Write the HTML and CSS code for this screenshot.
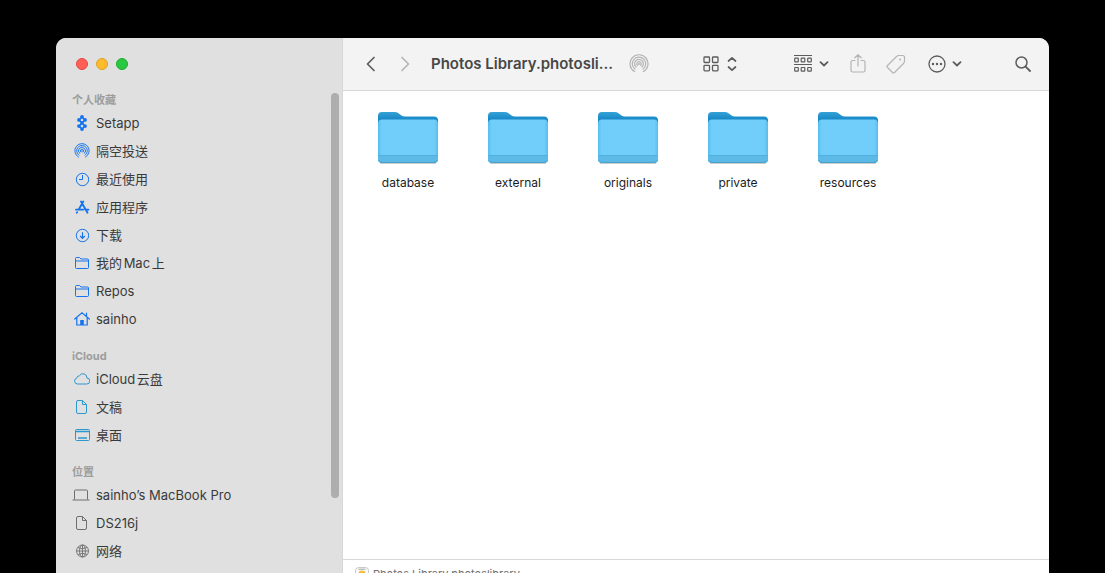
FILE: index.html
```html
<!DOCTYPE html>
<html lang="zh-CN">
<head>
<meta charset="utf-8">
<meta name="viewport" content="width=device-width, initial-scale=1">
<title>Photos Library.photoslibrary</title>
<link rel="stylesheet" href="styles.css">
</head>
<body>
<svg class="defs" aria-hidden="true">
  <defs>
    <linearGradient id="folder-back" x1="0" y1="0" x2="0" y2="1">
      <stop offset="0" stop-color="#35a3d8"/><stop offset=".16" stop-color="#1585c4"/><stop offset="1" stop-color="#1585c4"/>
    </linearGradient>
    <linearGradient id="folder-front" x1="0" y1="0" x2="1" y2="0">
      <stop offset="0" stop-color="#55bdec"/><stop offset=".06" stop-color="#71cdfa"/><stop offset=".94" stop-color="#71cdfa"/><stop offset="1" stop-color="#55bdec"/>
    </linearGradient>
    <symbol id="i-airdrop" viewBox="0 0 20 20">
      <g fill="none" stroke="currentColor" stroke-width="1.200" stroke-linecap="round">
        <path d="M5.600 17.600A9 9 0 1 1 14.400 17.600"/>
        <path d="M6 15.200A6.700 6.700 0 1 1 14 15.200"/>
        <path d="M7 13A4.400 4.400 0 1 1 13 13"/>
        <path d="M8.500 11.300A2.100 2.100 0 1 1 11.500 11.300"/>
      </g>
      <circle cx="10" cy="10" r="1" fill="currentColor"/>
    </symbol>
    <symbol id="i-folder" viewBox="0 0 16 16">
      <path d="M1.500 12.500V3.500q0-1 1-1h3l1.500 1.500h6.500q1 0 1 1v7.500q0 1-1 1h-11q-1 0-1-1zM1.500 6h13" fill="none" stroke="currentColor"/>
    </symbol>
    <symbol id="i-doc" viewBox="0 0 16 16">
      <path d="M4 1.500h4.500l4 4v7.500q0 1.500-1.500 1.500h-7q-1.500 0-1.500-1.500v-10q0-1.500 1.500-1.500zM8.500 1.500v4h4" fill="none" stroke="currentColor"/>
    </symbol>
    <symbol id="i-down" viewBox="0 0 10 6">
      <path d="M1.500 1.200L5 4.500l3.500-3.300" fill="none" stroke="currentColor" stroke-width="1.800" stroke-linecap="round" stroke-linejoin="round"/>
    </symbol>
    <symbol id="i-big-folder" viewBox="0 0 60 53">
      <path d="M2 52.300h56" stroke="#000" stroke-opacity=".25"/>
      <path d="M0 5q0-4 4-4h12.500q2.500 0 4 1.300l3 2.300q1.400 1 3.500 1h29q4 0 4 4v38q0 4-4 4h-52q-4 0-4-4z" fill="url(#folder-back)"/>
      <path d="M0 12.500q0-4 4-4h52q4 0 4 4v35.500q0 4-4 4h-52q-4 0-4-4z" fill="url(#folder-front)"/>
      <path d="M0 45h60v3q0 4-4 4h-52q-4 0-4-4z" fill="#5db9e6"/>
      <path d="M0 44.500h60" stroke="#50b1df"/>
      <path d="M1 49.500q1 1.900 3 1.900h52q2 0 3-1.900" fill="none" stroke="#459fca"/>
    </symbol>
  </defs>
</svg>

<div class="window">
  <aside class="sidebar">
    <div class="lights">
      <button class="light close" aria-label="关闭"></button>
      <button class="light minimize" aria-label="最小化"></button>
      <button class="light maximize" aria-label="缩放"></button>
    </div>
    <nav class="places">
      <section class="group">
        <h2 class="heading">个人收藏</h2>
        <a class="place" href="#"><svg class="icon" viewBox="0 0 16 16"><g fill="currentColor"><circle cx="8" cy="1.900" r="1.900"/><circle cx="5" cy="4.900" r="1.900"/><circle cx="11" cy="4.900" r="1.900"/><circle cx="8" cy="8" r="1.900"/><circle cx="5" cy="11.100" r="1.900"/><circle cx="11" cy="11.100" r="1.900"/><circle cx="8" cy="14.100" r="1.900"/><path d="M8 2l3 3-6 6 3 3 3-3-6-6z" fill="none" stroke="currentColor" stroke-width="1.200"/></g></svg>Setapp</a>
        <a class="place" href="#"><svg class="icon"><use href="#i-airdrop"/></svg>隔空投送</a>
        <a class="place" href="#"><svg class="icon" viewBox="0 0 16 16"><g fill="none" stroke="currentColor"><circle cx="8.500" cy="8.500" r="6.200"/><path d="M8.500 4v4.500h-3.500"/></g></svg>最近使用</a>
        <a class="place" href="#"><svg class="icon" viewBox="0 0 16 16"><g fill="none" stroke="currentColor" stroke-width="1.800" stroke-linecap="round"><path d="M9.300 2.500L5 10M7 2.500l6.500 11.300M2 10.700h7.500M12.500 10.700h2M3.200 13.200l-.4.600"/></g></svg>应用程序</a>
        <a class="place" href="#"><svg class="icon" viewBox="0 0 16 16"><g fill="none" stroke="currentColor"><circle cx="8.500" cy="8.500" r="6.200"/><path d="M8.500 5.200v6M6.200 9l2.300 2.300 2.300-2.300" stroke-width="1.200"/></g></svg>下载</a>
        <a class="place" href="#"><svg class="icon"><use href="#i-folder"/></svg>我的Mac上</a>
        <a class="place" href="#"><svg class="icon"><use href="#i-folder"/></svg>Repos</a>
        <a class="place" href="#"><svg class="icon" viewBox="0 0 16 16"><path d="M.7 8L8 1.700 15.300 8M2.800 6.800v7.200h10.400v-7.200M12.500 5v-2.800" fill="none" stroke="currentColor" stroke-width="1.200" stroke-linecap="round"/><path d="M6.200 9h3.600v5h-3.600z" fill="currentColor"/></svg>sainho</a>
      </section>
      <section class="group cloud">
        <h2 class="heading">iCloud</h2>
        <a class="place" href="#"><svg class="icon" viewBox="0 0 16 16"><path d="M3.600 13a3 3 0 0 1-.8-5.900a2.600 2.600 0 0 1 2.600-2.300a4 4 0 0 1 7.500 2.200a3 3 0 0 1-.2 6z" fill="none" stroke="currentColor"/></svg>iCloud云盘</a>
        <a class="place" href="#"><svg class="icon"><use href="#i-doc"/></svg>文稿</a>
        <a class="place" href="#"><svg class="icon" viewBox="0 0 16 16"><rect x="1.500" y="2.500" width="14" height="11" rx="1" fill="none" stroke="currentColor"/><path d="M1.500 4.500h14M4 11h9" stroke="currentColor" stroke-width="1.400"/></svg>桌面</a>
      </section>
      <section class="group devices">
        <h2 class="heading">位置</h2>
        <a class="place" href="#"><svg class="icon wide" viewBox="0 0 18 16"><path d="M2.500 12.500v-8.500q0-1 1-1h11q1 0 1 1v8.500M.5 13h17" fill="none" stroke="currentColor"/></svg>sainho’s MacBook Pro</a>
        <a class="place" href="#"><svg class="icon"><use href="#i-doc"/></svg>DS216j</a>
        <a class="place" href="#"><svg class="icon" viewBox="0 0 16 16"><g fill="none" stroke="currentColor" stroke-width=".9"><circle cx="8.500" cy="8" r="6"/><ellipse cx="8.500" cy="8" rx="3" ry="6"/><path d="M8.500 2v12M2.500 8h12M3.800 4.500q4.700 2.400 9.400 0M3.800 11.500q4.700-2.400 9.400 0"/></g></svg>网络</a>
      </section>
    </nav>
    <div class="scrollbar"></div>
  </aside>

  <main class="content">
    <header class="toolbar">
      <button class="tool" aria-label="后退"><svg class="glyph" viewBox="0 0 16 16"><path d="M11 1.500L4.500 8l6.500 6.500" fill="none" stroke="currentColor" stroke-width="1.700" stroke-linecap="round" stroke-linejoin="round"/></svg></button>
      <button class="tool forward" aria-label="前进" disabled><svg class="glyph" viewBox="0 0 16 16"><path d="M5 1.500L11.500 8 5 14.500" fill="none" stroke="currentColor" stroke-width="1.700" stroke-linecap="round" stroke-linejoin="round"/></svg></button>
      <h1 class="title">Photos Library.photosli...</h1>
      <button class="tool" aria-label="隔空投送" disabled><svg class="glyph large"><use href="#i-airdrop"/></svg></button>
      <button class="tool view" aria-label="显示方式">
        <svg class="glyph" viewBox="0 0 16 16"><g fill="none" stroke="currentColor" stroke-width="1.300"><rect x="1" y="1" width="5.500" height="5.500" rx=".8"/><rect x="9.500" y="1" width="5.500" height="5.500" rx=".8"/><rect x="1" y="9.300" width="5.500" height="5.500" rx=".8"/><rect x="9.500" y="9.300" width="5.500" height="5.500" rx=".8"/></g></svg>
        <svg class="arrows" viewBox="0 0 10 16"><path d="M1.500 5L5 1.800 8.500 5M1.500 11L5 14.200 8.500 11" fill="none" stroke="currentColor" stroke-width="1.700" stroke-linecap="round" stroke-linejoin="round"/></svg>
      </button>
      <button class="tool sort" aria-label="分组">
        <svg class="glyph large" viewBox="0 0 20 20"><g fill="none" stroke="currentColor" stroke-width="1.200"><path d="M1 1.500h18M1 10.500h18"/><rect x="1.700" y="4.200" width="3.600" height="3.600" rx=".6"/><rect x="8.200" y="4.200" width="3.600" height="3.600" rx=".6"/><rect x="14.700" y="4.200" width="3.600" height="3.600" rx=".6"/><rect x="1.700" y="13.500" width="3.600" height="3.600" rx=".6"/><rect x="8.200" y="13.500" width="3.600" height="3.600" rx=".6"/><rect x="14.700" y="13.500" width="3.600" height="3.600" rx=".6"/></g></svg>
        <svg class="caret"><use href="#i-down"/></svg>
      </button>
      <button class="tool share" aria-label="共享" disabled><svg class="glyph large" viewBox="0 0 20 20"><path d="M7 6.500H4.500q-1.500 0-1.500 1.500v8.500q0 1.500 1.500 1.500h11q1.500 0 1.500-1.500v-8.500q0-1.500-1.500-1.500H13M10 12V.8M6.800 3.800L10 .7l3.200 3.100" fill="none" stroke="currentColor" stroke-width="1.200" stroke-linecap="round" stroke-linejoin="round"/></svg></button>
      <button class="tool tag" aria-label="标签" disabled><svg class="glyph large" viewBox="0 0 20 20"><path d="M1.500 11.500L10.500 2.500q1-1 2.500-1h3.500q2 0 2 2v3.500q0 1.500-1 2.500l-9 9q-1 1-2 0l-5-5q-1-1 0-2z" fill="none" stroke="currentColor" stroke-width="1.200" stroke-linejoin="round"/><circle cx="14" cy="5.500" r="1" fill="currentColor"/></svg></button>
      <button class="tool more" aria-label="操作">
        <svg class="glyph large" viewBox="0 0 20 20"><circle cx="10" cy="10" r="8" fill="none" stroke="currentColor" stroke-width="1.300"/><g fill="currentColor"><circle cx="6" cy="10" r="1.200"/><circle cx="10" cy="10" r="1.200"/><circle cx="14" cy="10" r="1.200"/></g></svg>
        <svg class="caret"><use href="#i-down"/></svg>
      </button>
      <button class="tool search" aria-label="搜索"><svg class="glyph" viewBox="0 0 16 16"><circle cx="6.500" cy="6.500" r="5.500" fill="none" stroke="currentColor" stroke-width="1.500"/><path d="M10.600 10.600L15 15" stroke="currentColor" stroke-width="1.800" stroke-linecap="round"/></svg></button>
    </header>
    <div class="files">
      <a class="file" href="#"><svg class="folder"><use href="#i-big-folder"/></svg>database</a>
      <a class="file" href="#"><svg class="folder"><use href="#i-big-folder"/></svg>external</a>
      <a class="file" href="#"><svg class="folder"><use href="#i-big-folder"/></svg>originals</a>
      <a class="file" href="#"><svg class="folder"><use href="#i-big-folder"/></svg>private</a>
      <a class="file" href="#"><svg class="folder"><use href="#i-big-folder"/></svg>resources</a>
    </div>
    <footer class="pathbar">
      <svg class="app" viewBox="0 0 14 14"><rect x=".5" y=".5" width="13" height="13" rx="3" fill="#fafafa" stroke="#c9c9c9"/><path d="M3.500 2.200h7" stroke="#9aa79a"/><ellipse cx="7" cy="5.500" rx="3.200" ry="2" fill="#f6c13c"/><ellipse cx="5" cy="8" rx="1.800" ry="2.500" fill="#e9a04f"/><ellipse cx="9" cy="8" rx="1.800" ry="2.500" fill="#f09a3e"/></svg>
      <span>Photos Library.photoslibrary</span>
    </footer>
  </main>
</div>
</body>
</html>
```

FILE: styles.css
```css
* {
  box-sizing: border-box;
}

body {
  margin: 0;
  height: 100vh;
  overflow: hidden;
  padding: 38px 56px 0;
  background: #000;
  color: #3a3a3a;
  font: 13px/20px Inter, "Noto Sans CJK SC", sans-serif;
  text-autospace: normal;
}

a {
  color: inherit;
  text-decoration: none;
}

.defs {
  position: absolute;
  width: 0;
  height: 0;
}

.window {
  display: flex;
  height: calc(100vh - 24px);
  border-radius: 10px;
  overflow: hidden;
  background: #fff;
}

.sidebar {
  position: relative;
  flex: 0 0 287px;
  background: #e0e0e0;
  border-right: 1px solid #d8d8d8;
}

.lights {
  display: flex;
  align-items: center;
  gap: 8px;
  height: 52px;
  padding-left: 20px;
}

.light {
  width: 12px;
  height: 12px;
  padding: 0;
  border: 1px solid;
  border-radius: 50%;
}

.close {
  background: #fe5f57;
  border-color: #e14942;
}

.minimize {
  background: #febb2e;
  border-color: #dfa023;
}

.maximize {
  background: #28c840;
  border-color: #1eab2c;
}

.group {
  margin-bottom: 12px;
}

.heading {
  margin: 0;
  padding-left: 16px;
  color: #9c9c9c;
  font-size: 11px;
  line-height: 20px;
  font-weight: 700;
}

.place {
  display: flex;
  align-items: center;
  gap: 6px;
  height: 28px;
  padding: 0 0 2px 18px;
  white-space: nowrap;
}

.icon {
  flex: none;
  width: 16px;
  height: 16px;
  color: #1473ee;
}

.wide {
  width: 18px;
  margin-left: -2px;
}

.cloud .icon {
  color: #2b98cf;
}

.devices .icon {
  color: #6f6f6f;
}

.scrollbar {
  position: absolute;
  top: 55px;
  right: 3px;
  width: 8px;
  height: 405px;
  border-radius: 4px;
  background: #aeaeae;
}

.content {
  flex: 1;
  min-width: 0;
  display: flex;
  flex-direction: column;
}

.toolbar {
  display: flex;
  align-items: center;
  height: 53px;
  padding: 0 14px 0 16px;
  background: #f3f3f3;
  border-bottom: 1px solid #d8d8d8;
}

.tool {
  display: flex;
  align-items: center;
  justify-content: center;
  flex: none;
  min-width: 24px;
  height: 28px;
  padding: 0;
  border: 0;
  background: none;
  color: #5c5c5c;
}

.tool:disabled {
  color: #b4b4b4;
}

.glyph {
  width: 16px;
  height: 16px;
}

.large {
  width: 20px;
  height: 20px;
}

.arrows {
  width: 10px;
  height: 16px;
}

.caret {
  width: 10px;
  height: 6px;
}

.forward {
  margin-left: 10px;
}

.title {
  width: 196px;
  margin: 0 0 0 14px;
  color: #474747;
  font-size: 15px;
  line-height: 20px;
  font-weight: 600;
  white-space: nowrap;
}

.view {
  gap: 8px;
  margin-left: 52px;
}

.sort {
  gap: 6px;
  margin-left: 56px;
}

.share {
  margin-left: 17px;
}

.tag {
  margin-left: 14px;
}

.more {
  gap: 5px;
  margin-left: 19px;
}

.search {
  margin-left: auto;
}

.files {
  flex: 1;
  display: grid;
  grid-template-columns: repeat(auto-fill, 110px);
  align-content: start;
  padding: 20px 10px;
}

.file {
  display: flex;
  flex-direction: column;
  align-items: center;
  gap: 9px;
  color: #1c1c1c;
  font-size: 12px;
  line-height: 20px;
}

.folder {
  width: 60px;
  height: 53px;
}

.pathbar {
  display: flex;
  align-items: center;
  gap: 4px;
  height: 28px;
  padding-left: 12px;
  border-top: 1px solid #d8d8d8;
  color: #6f6f6f;
  font-size: 11px;
}

.app {
  width: 14px;
  height: 14px;
}
```
